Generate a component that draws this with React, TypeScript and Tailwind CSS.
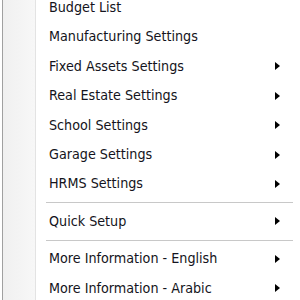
const items: { label: string; arrow?: boolean; sep?: boolean }[] = [
  { label: 'Budget List' },
  { label: 'Manufacturing Settings' },
  { label: 'Fixed Assets Settings', arrow: true },
  { label: 'Real Estate Settings', arrow: true },
  { label: 'School Settings', arrow: true },
  { label: 'Garage Settings', arrow: true },
  { label: 'HRMS Settings', arrow: true },
  { label: '', sep: true },
  { label: 'Quick Setup', arrow: true },
  { label: '', sep: true },
  { label: 'More Information - English', arrow: true },
  { label: 'More Information - Arabic', arrow: true },
];

export default function App() {
  return (
    <div className="w-[300px] h-[300px] overflow-hidden bg-white flex">
      {/* left frame + icon gutter */}
      <div className="w-[2px] bg-white" />
      <div className="w-[1px] bg-[#a0a0a0]" />
      <div className="w-[33px] bg-gradient-to-r from-[#f0f0f0] to-[#f7f7f7] border-r border-[#e3e3e3]" />
      <div className="flex-1 -mt-[7px] font-['Tahoma','DejaVu_Sans_Condensed','DejaVu_Sans',sans-serif] text-[14.2px] text-[#141420]">
        {items.map((it, i) =>
          it.sep ? (
            <div key={i} className="h-[8px] flex items-center pl-[10px] pr-[7px]">
              <div className="w-full h-[1px] bg-[#c8c8c8]" />
            </div>
          ) : (
            <div key={i} className="h-[29.4px] flex items-center pl-[13px] pr-[20px]">
              <span className="flex-1 whitespace-nowrap">{it.label}</span>
              {it.arrow && (
                <svg width="5" height="8" viewBox="0 0 5 8">
                  <path d="M0 0 L5 4 L0 8 Z" fill="#000" />
                </svg>
              )}
            </div>
          )
        )}
      </div>
    </div>
  );
}
